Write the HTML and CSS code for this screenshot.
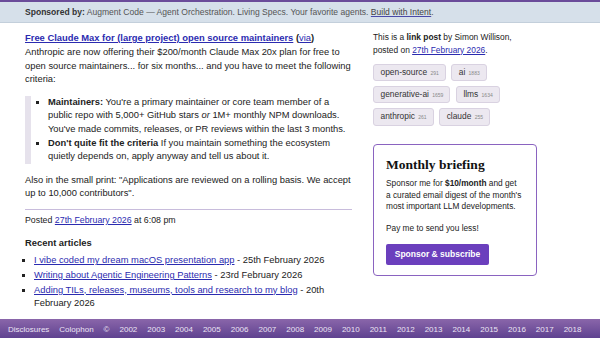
FILE: index.html
```html
<!DOCTYPE html>
<html lang="en">
<head>
    <meta charset="UTF-8">
    <meta name="viewport" content="width=device-width, initial-scale=1.0">
    <title>Free Claude Max for (large project) open source maintainers</title>
    <link rel="stylesheet" href="styles.css">
</head>
<body>
    <!-- Sponsor banner -->
    <div class="sponsor">
        <strong>Sponsored by:</strong> Augment Code &mdash; Agent Orchestration. Living Specs. Your favorite agents. <a href="#">Build with Intent</a>.
    </div>

    <div class="page">
        <!-- Main entry -->
        <div class="entry">
            <p class="entry-title"><a href="#">Free Claude Max for (large project) open source maintainers</a> (<a href="#" class="via">via</a>)</p>
            <p>Anthropic are now offering their $200/month Claude Max 20x plan for free to open source maintainers... for six months... and you have to meet the following criteria:</p>
            <blockquote>
                <ul>
                    <li><strong>Maintainers:</strong> You're a primary maintainer or core team member of a public repo with 5,000+ GitHub stars <em>or</em> 1M+ monthly NPM downloads. You've made commits, releases, or PR reviews within the last 3 months.</li>
                    <li><strong>Don't quite fit the criteria</strong> If you maintain something the ecosystem quietly depends on, apply anyway and tell us about it.</li>
                </ul>
            </blockquote>
            <p>Also in the small print: "Applications are reviewed on a rolling basis. We accept up to 10,000 contributors".</p>
            <p class="posted">Posted <a href="#">27th February 2026</a> at 6:08 pm</p>

            <h3>Recent articles</h3>
            <ul class="recent">
                <li><a href="#">I vibe coded my dream macOS presentation app</a> - 25th February 2026</li>
                <li><a href="#">Writing about Agentic Engineering Patterns</a> - 23rd February 2026</li>
                <li><a href="#">Adding TILs, releases, museums, tools and research to my blog</a> - 20th February 2026</li>
            </ul>
        </div>

        <!-- Sidebar -->
        <div class="sidebar">
            <p class="meta">This is a <strong>link post</strong> by Simon Willison, posted on <a href="#">27th February 2026</a>.</p>
            <div class="tags">
                <a href="#" class="tag">open-source <span>291</span></a>
                <a href="#" class="tag">ai <span>1883</span></a>
                <a href="#" class="tag">generative-ai <span>1659</span></a>
                <a href="#" class="tag">llms <span>1634</span></a>
                <a href="#" class="tag">anthropic <span>261</span></a>
                <a href="#" class="tag">claude <span>255</span></a>
            </div>

            <div class="briefing">
                <h2>Monthly briefing</h2>
                <p>Sponsor me for <strong>$10/month</strong> and get a&nbsp;curated email digest of the month's most important LLM developments.</p>
                <p>Pay me to send you less!</p>
                <a href="#" class="sponsor-button">Sponsor &amp; subscribe</a>
            </div>
        </div>
    </div>

    <footer>
        <a href="#">Disclosures</a>
        <a href="#">Colophon</a>
        <span>&copy;</span>
        <a href="#">2002</a>
        <a href="#">2003</a>
        <a href="#">2004</a>
        <a href="#">2005</a>
        <a href="#">2006</a>
        <a href="#">2007</a>
        <a href="#">2008</a>
        <a href="#">2009</a>
        <a href="#">2010</a>
        <a href="#">2011</a>
        <a href="#">2012</a>
        <a href="#">2013</a>
        <a href="#">2014</a>
        <a href="#">2015</a>
        <a href="#">2016</a>
        <a href="#">2017</a>
        <a href="#">2018</a>
    </footer>
</body>
</html>
```

FILE: styles.css
```css
* {
    margin: 0;
    padding: 0;
    box-sizing: border-box;
}

body {
    font-family: 'Liberation Sans', Arial, sans-serif;
    background: #fff;
    color: #222;
    min-height: 100vh;
    display: flex;
    flex-direction: column;
    overflow: hidden;
}

a {
    color: #2b2bb0;
}

/* Sponsor banner */
.sponsor {
    background-color: #d6e0ea;
    border-top: 2px solid #6b4c9a;
    border-bottom: 1px solid #c3cfdb;
    height: 23px;
    padding: 0 25px;
    font-size: 8.55px;
    line-height: 20.5px;
    color: #555;
}

.sponsor strong {
    color: #333;
}

.sponsor a {
    color: #444;
    text-decoration-color: #4a4aa8;
}

/* Two columns */
.page {
    display: flex;
    padding: 8px 0 0 25px;
}

.entry {
    width: 327px;
    font-size: 9.35px;
    line-height: 13.4px;
}

.entry-title {
    font-weight: bold;
    font-size: 9.4px;
    line-height: 14.7px;
    margin-bottom: 0.6px;
}

.entry-title .via {
    font-weight: normal;
}

blockquote {
    margin: 9.5px 0 10px;
    border-left: 6.7px solid #e6e2ec;
    padding-left: 8px;
}

blockquote ul {
    list-style-type: square;
    padding-left: 9px;
}

blockquote li + li {
    margin-top: 0.6px;
}

.posted {
    font-size: 8.8px;
    border-top: 1.3px solid #c8bcdc;
    margin-top: 8.5px;
    padding-top: 4px;
}

.entry h3 {
    font-size: 9.4px;
    margin-top: 9px;
    margin-bottom: 4.5px;
}

.recent {
    list-style-type: square;
    padding-left: 9px;
}

.recent li + li {
    margin-top: 1.3px;
}

/* Sidebar */
.sidebar {
    width: 164px;
    margin-left: 21px;
    font-size: 8.4px;
    line-height: 13px;
}

.meta {
    margin-top: -0.5px;
}

.tags {
    display: flex;
    flex-wrap: wrap;
    gap: 5px 5.5px;
    margin-top: 7px;
    width: 130px;
}

.tag {
    display: inline-block;
    height: 17.4px;
    line-height: 15.4px;
    padding: 0 6px 0 6.5px;
    background-color: #ece8f0;
    border: 1px solid #d9d2e1;
    border-radius: 3px;
    color: #333;
    text-decoration: none;
}

.tag span {
    font-size: 5px;
    color: #888;
    margin-left: 1px;
}

.briefing {
    margin-top: 18.6px;
    border: 1.5px solid #8a63c0;
    border-radius: 4px;
    padding: 11px 8px 10px 12px;
    font-size: 8.3px;
    line-height: 11.5px;
}

.briefing h2 {
    font-family: 'Liberation Serif', Georgia, serif;
    font-size: 13.5px;
    line-height: 17px;
    color: #111;
    margin-bottom: 5px;
}

.briefing p + p {
    margin-top: 10.5px;
}

.sponsor-button {
    display: inline-block;
    margin-top: 9px;
    width: 103px;
    height: 21.7px;
    line-height: 21.7px;
    text-align: center;
    background-color: #6b3fbd;
    color: #fff;
    font-weight: bold;
    font-size: 8.5px;
    border-radius: 2px;
    text-decoration: none;
}

/* Footer */
footer {
    margin-top: auto;
    height: 19px;
    padding: 5px 8px 0;
    background: linear-gradient(#8a66aa, #5f4290);
    font-size: 8px;
    line-height: 12px;
    display: flex;
    gap: 10px;
    white-space: nowrap;
}

footer a, footer span {
    color: #ece4f4;
    text-decoration: none;
}
```
